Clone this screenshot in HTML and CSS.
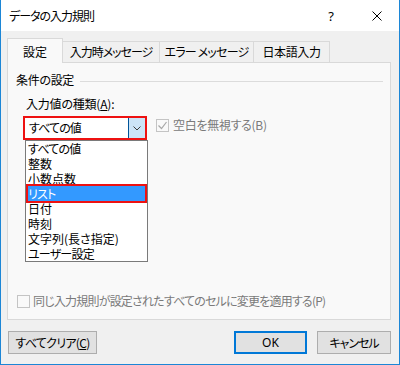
FILE: index.html
```html
<!DOCTYPE html>
<html lang="ja">
<head>
<meta charset="utf-8">
<title>データの入力規則</title>
<link rel="stylesheet" href="styles.css">
</head>
<body>
<div class="window">
  <div class="titlebar">
    <span class="title">データの入力規則</span>
    <span class="cap-btn help">?</span>
    <span class="cap-btn close">
      <svg width="10" height="10" viewBox="0 0 10 10"><path d="M0.5 0.5 L9.5 9.5 M9.5 0.5 L0.5 9.5" stroke="#000" stroke-width="1" fill="none"/></svg>
    </span>
  </div>
  <div class="content">
    <div class="tabs">
      <div class="tab active t1">設定</div>
      <div class="tab t2">入力時メッセージ</div>
      <div class="tab t3">エラー メッセージ</div>
      <div class="tab t4">日本語入力</div>
    </div>
    <div class="panel">
      <div class="group-head"><span>条件の設定</span><span class="rule"></span></div>
      <div class="field-label">入力値の種類(<u>A</u>):</div>
      <div class="row">
        <div class="combo">
          <span class="combo-text">すべての値</span>
          <span class="combo-btn">
            <svg width="8" height="5" viewBox="0 0 8 5"><path d="M0.5 0.5 L4 4 L7.5 0.5" stroke="#3c3c3c" stroke-width="1" fill="none"/></svg>
          </span>
        </div>
        <div class="check disabled ignore">
          <span class="box">
            <svg width="11" height="11" viewBox="0 0 11 11"><path d="M1.5 5.5 L4.5 8.5 L9.5 2" stroke="#a8a8a8" stroke-width="1.2" fill="none"/></svg>
          </span>
          <span class="check-text">空白を無視する(B)</span>
        </div>
      </div>
      <ul class="listbox">
        <li class="item kana">すべての値</li>
        <li class="item">整数</li>
        <li class="item">小数点数</li>
        <li class="item selected kana">リスト</li>
        <li class="item">日付</li>
        <li class="item">時刻</li>
        <li class="item">文字列(長さ指定)</li>
        <li class="item kana">ユーザー設定</li>
      </ul>
      <div class="check disabled apply">
        <span class="box"></span>
        <span class="check-text">同じ入力規則が設定されたすべてのセルに変更を適用する(P)</span>
      </div>
    </div>
    <div class="buttons">
      <div class="btn clear">すべてクリア(<u>C</u>)</div>
      <div class="btn ok">OK</div>
      <div class="btn cancel">キャンセル</div>
    </div>
  </div>
</div>
</body>
</html>
```
FILE: styles.css
```css
* { box-sizing: border-box; }
html, body { margin: 0; padding: 0; }
body {
  font-family: "Noto Sans CJK JP", "Noto Sans", sans-serif;
  font-size: 12px;
  color: #000;
  font-feature-settings: "palt";
  background: #fff;
}
.window {
  width: 400px;
  height: 365px;
  border: 1px solid #1c86d6;
  border-top: none;
  display: flex;
  flex-direction: column;
  background: #f0f0f0;
}
.titlebar {
  height: 31px;
  flex-shrink: 0;
  background: #fff;
  display: flex;
  align-items: center;
}
.title {
  flex: 1;
  padding-left: 8px;
  line-height: 16px;
  letter-spacing: -1px;
}
.cap-btn {
  width: 46px;
  height: 31px;
  display: flex;
  align-items: center;
  justify-content: center;
}
.help { font-size: 13px; font-family: "Noto Sans", sans-serif; }
.close { width: 45px; }
.content {
  flex: 1;
  padding: 7px 8px 0 6px;
  display: flex;
  flex-direction: column;
}
.tabs {
  display: flex;
  align-items: flex-end;
  height: 24px;
}
.tab {
  height: 21px;
  border: 1px solid #d9d9d9;
  border-bottom: none;
  margin-left: -1px;
  background: #f0f0f0;
  display: flex;
  align-items: center;
  justify-content: center;
  line-height: 16px;
  white-space: pre;
}
.tab.active {
  height: 25px;
  margin-left: 0;
  margin-bottom: -1px;
  padding-top: 1px;
  background: #f9f9f9;
  position: relative;
  z-index: 1;
}
.t1 { width: 56px; }
.t2 { width: 98px; letter-spacing: -1px; }
.t3 { width: 95px; letter-spacing: -0.8px; }
.t4 { width: 77px; letter-spacing: -0.4px; }
.panel {
  height: 258px;
  flex-shrink: 0;
  border: 1px solid #d9d9d9;
  background: #f9f9f9;
  position: relative;
  display: flex;
  flex-direction: column;
  padding: 0 7px 0 8px;
}
.group-head {
  margin-top: 9px;
  display: flex;
  align-items: center;
  line-height: 16px;
  letter-spacing: -0.3px;
}
.rule {
  flex: 1;
  height: 1px;
  margin-left: 6px;
  margin-top: 2px;
  background: #dcdcdc;
}
.field-label {
  margin-top: 8px;
  margin-left: 10px;
  line-height: 16px;
  letter-spacing: -0.2px;
}
.row {
  margin-top: 4px;
  margin-left: 7px;
  display: flex;
  align-items: flex-start;
}
.combo {
  width: 124px;
  height: 24px;
  border: 2px solid #ee1111;
  background: #fff;
  display: flex;
}
.combo-text {
  flex: 1;
  padding-left: 4px;
  line-height: 20px;
  letter-spacing: -0.9px;
}
.combo-btn {
  width: 17px;
  background: #cce4f7;
  border-left: 1px solid #005499;
  display: flex;
  align-items: center;
  justify-content: center;
}
.check {
  display: flex;
  align-items: center;
  line-height: 16px;
}
.box {
  width: 13px;
  height: 13px;
  border: 1px solid #c4c4c4;
  background: #f9f9f9;
  display: flex;
  align-items: center;
  justify-content: center;
  flex-shrink: 0;
}
.check-text { margin-left: 4px; }
.disabled .check-text { color: #7a7a7a; }
.ignore {
  margin-left: 9px;
  margin-top: 1px;
}
.ignore .check-text { letter-spacing: -0.3px; }
.apply {
  margin-top: auto;
  margin-bottom: 10px;
  margin-left: 1px;
}
.apply .check-text { margin-left: 3px; letter-spacing: -0.8px; }
.listbox {
  position: absolute;
  left: 17px;
  top: 77px;
  width: 123px;
  height: 122px;
  margin: 0;
  padding: 0;
  list-style: none;
  background: #fff;
  border: 1px solid #7a7a7a;
}
.item {
  height: 15px;
  line-height: 15px;
  padding-left: 2px;
  white-space: nowrap;
  overflow: hidden;
}
.item.kana { letter-spacing: -0.8px; }
.item.selected {
  margin: 0 2px;
  padding-left: 0;
  background: #3399ff;
  color: #fff;
  outline: 2px solid #ee1111;
  overflow: visible;
}
.buttons {
  margin-top: 11px;
  display: flex;
}
.btn {
  height: 23px;
  background: #e1e1e1;
  border: 1px solid #adadad;
  display: flex;
  align-items: center;
  justify-content: center;
  line-height: 16px;
}
.clear { width: 89px; margin-left: 1px; letter-spacing: -0.7px; }
.ok {
  width: 73px;
  margin-left: auto;
  border: 2px solid #0078d7;
  font-family: "Noto Sans", sans-serif;
}
.cancel { width: 74px; margin-left: 10px; letter-spacing: -1px; }
```
